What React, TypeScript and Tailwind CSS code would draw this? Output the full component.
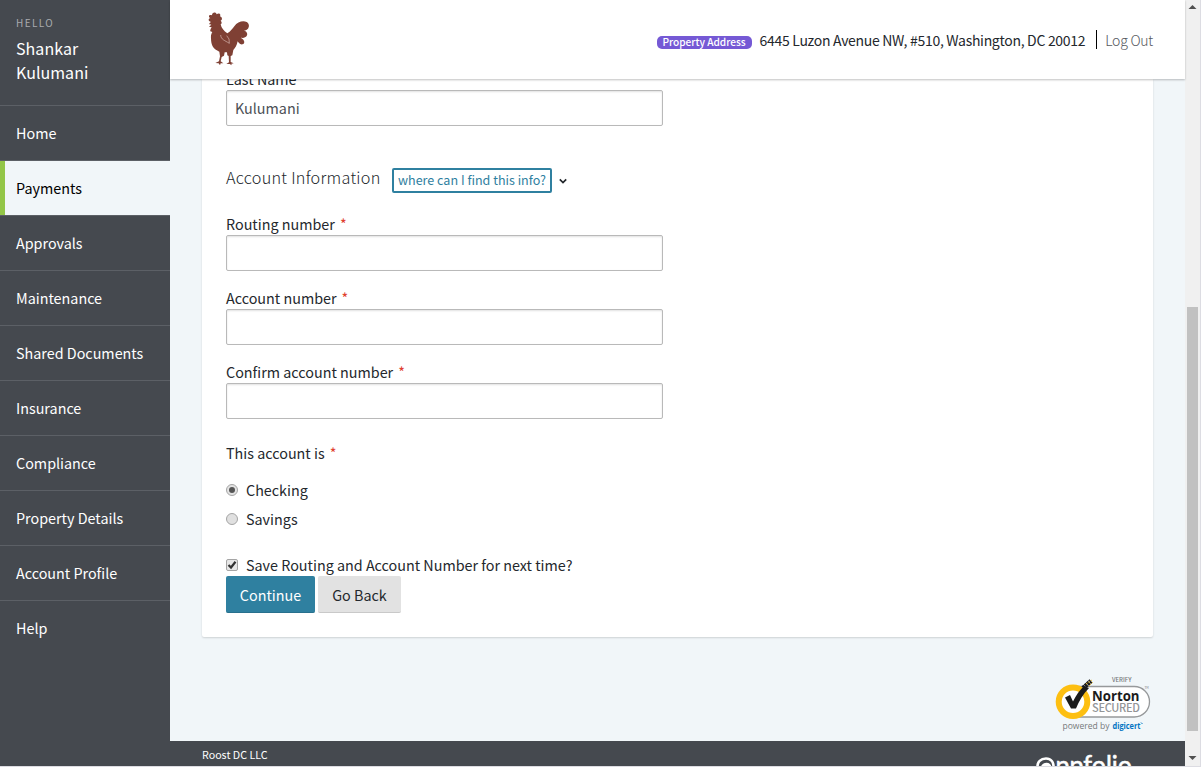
import React from "react";

const nav = [
  "Home",
  "Payments",
  "Approvals",
  "Maintenance",
  "Shared Documents",
  "Insurance",
  "Compliance",
  "Property Details",
  "Account Profile",
  "Help",
];

function Field({ label, value, required, gap }: { label: string; value?: string; required?: boolean; gap: string }) {
  return (
    <label className={`block ${gap}`}>
      <span className="block h-[22px] text-[14.35px] leading-[22px] text-[#24282d]">
        {label}
        {required && <span className="ml-[5px] text-[#e0402f]">*</span>}
      </span>
      <input
        readOnly
        defaultValue={value}
        className="block h-9 w-[437px] rounded-[2px] border border-[#b9b9b9] bg-white px-2 pb-[2px] text-[14.35px] text-[#4b4f55] shadow-[inset_0_1px_2px_rgba(0,0,0,0.12)] outline-none"
      />
    </label>
  );
}

function Rooster() {
  return (
    <svg className="-mt-px block h-[54px] w-[42px]" viewBox="54 36 126 162" fill="#7f4034">
      <path d="M64 74C56 74 56 70 63 66C54 64 54 55 61 55C53 49 58 42 66 46C66 36 78 35 80 43C86 37 94 42 90 49C98 52 97 60 92 62C96 66 96 70 92 73C94 84 102 93 112 100C122 94 128 86 133 79C142 66 158 61 170 66C180 72 177 82 173 87C168 92 162 92 160 92C174 92 175 108 165 112C160 115 154 113 152 113C164 118 166 130 158 133C150 135 146 129 143 124C140 137 136 144 130 150L127 166L122 168L122 186L131 190L124 191L125 196L119 192L109 192L117 187L116 168L112 166L111 157H104L102 167L95 171L92 184L100 190L92 190L90 196L86 190L76 189L87 184L90 169L88 155C70 147 63 137 63 115C62 105 65 99 67 96L61 94C60 90 62 86 65 82L57 80Z" />
      <path d="M92 105C93 119 104 121 118 130M118 130L117 117L110 107" fill="none" stroke="#ead0c9" strokeWidth="1.7" />
    </svg>
  );
}

export default function App() {
  return (
    <div className="h-[767px] w-[1201px] overflow-hidden border-b border-[#dcdce2] bg-[#f1f6f9] font-['Noto_Sans_CJK_SC',sans-serif] text-[#24282d]">
      <div className="flex h-[766px]">
        <aside className="h-full w-[170px] shrink-0 overflow-hidden bg-[#45494f] text-white">
          <div className="h-[105px] px-4 pt-[14px]">
            <div className="text-[10px] leading-[18px] tracking-[1.4px] text-[#a9abae]">HELLO</div>
            <div className="mt-1 text-[16px] leading-6 tracking-[0.05px]">Shankar<br />Kulumani</div>
          </div>
          <nav>
            {nav.map((n) => (
              <a
                key={n}
                className={
                  n === "Payments"
                    ? "flex h-[55px] items-center border-t border-[#5c6066] bg-[#f1f6f9] pl-4 text-[14.35px] text-black shadow-[inset_5px_0_0_#93c648]"
                    : "flex h-[55px] items-center border-t border-[#5c6066] pl-4 text-[14.35px]"
                }
              >
                {n}
              </a>
            ))}
          </nav>
        </aside>
        <div className="flex h-full w-[1015px] shrink-0 flex-col">
          <header className="relative z-10 flex h-[79px] shrink-0 items-center justify-between bg-white pr-8 pl-[38px] shadow-[0_1px_2px_rgba(0,0,0,0.25)]">
            <Rooster />
            <div className="flex items-center">
              <span className="mt-[5px] flex h-[13px] w-[95px] items-center justify-center rounded-[5px] bg-[#7559d5] pb-[2px] text-[10.1px] leading-[13px] font-medium text-white">Property Address</span>
              <span className="ml-2 text-[14px] leading-5 tracking-[-0.3px]">6445 Luzon Avenue NW, #510, Washington, DC 20012</span>
              <span className="ml-[11px] h-[19px] w-px bg-black" />
              <span className="ml-2 text-[14px] leading-5 font-light tracking-[-0.25px] text-[#55595e]">Log Out</span>
            </div>
          </header>
          <main className="h-[662px] shrink-0 px-8">
            <section className="h-[558px] overflow-hidden rounded-b-[2px] bg-white px-6 shadow-[0_1px_2px_rgba(0,0,0,0.15)]">
              <Field label="Last Name" value="Kulumani" gap="-mt-[11px]" />
              <div className="mt-[42px] flex h-[25px] items-center">
                <h2 className="-mt-[7px] text-[16.2px] leading-6 font-light tracking-[0.27px]">Account Information</h2>
                <button className="ml-[11.5px] h-[25px] w-[160px] rounded-[2px] border-2 border-[#2f80a0] pb-[2px] text-[12.55px] leading-[19px] text-[#2f80a0]">where can I find this info?</button>
                <svg className="ml-[7px] h-2 w-2" viewBox="0 0 8 8" fill="none" stroke="#24282d" strokeWidth="1.7"><path d="M.8 2.3L4 5.5L7.2 2.3" /></svg>
              </div>
              <Field label="Routing number" required gap="mt-5" />
              <Field label="Account number" required gap="mt-4" />
              <Field label="Confirm account number" required gap="mt-4" />
              <div className="mt-[23px] text-[14.35px] leading-[22px]">This account is<span className="ml-[5px] text-[#e0402f]">*</span></div>
              <div className="mt-[15px] flex h-[22px] items-center text-[14.35px]">
                <span className="mr-2 flex size-3 items-center justify-center rounded-full border border-[#a5a5a5] bg-[#e3e3e3]"><span className="size-[6px] rounded-full bg-[#555]" /></span>Checking
              </div>
              <div className="mt-[7px] flex h-[22px] items-center text-[14.35px]">
                <span className="mr-2 size-3 rounded-full border border-[#a5a5a5] bg-[#e0e0e0]" />Savings
              </div>
              <div className="mt-[24px] flex h-[22px] items-center text-[14.35px]">
                <span className="mr-2 flex size-3 items-center justify-center rounded-[2px] border border-[#a5a5a5] bg-[#e7e7e7]">
                  <svg className="size-[10px]" viewBox="0 0 10 10" fill="none" stroke="#333" strokeWidth="2.2"><path d="M1.5 5L4 7.5L8.5 1.8" /></svg>
                </span>
                Save Routing and Account Number for next time?
              </div>
              <div className="flex gap-[3px] text-[14.35px]">
                <button className="h-[37px] w-[89px] rounded-[2px] border-b border-[#28708d] bg-[#2f80a0] pt-px text-white">Continue</button>
                <button className="h-[37px] w-[83px] rounded-[2px] border-b border-[#c9c9c9] bg-[#e2e2e2] pt-px">Go Back</button>
              </div>
            </section>
            <div className="mt-[37px] flex justify-end">
              <svg className="h-[60px] w-[100px]" viewBox="1053 674 100 60">
                <text x="1112" y="682" fontSize="6.2" fontWeight="500" fill="#77797b" textLength="19.5" lengthAdjust="spacingAndGlyphs">VERIFY</text>
                <rect x="1064" y="686.5" width="85.5" height="30.5" rx="15.2" fill="#fff" stroke="#97999b" strokeWidth="1.3" />
                <circle cx="1073" cy="701.7" r="14.3" fill="#fff" stroke="#fdbf12" strokeWidth="6" />
                <path d="M1065 697.5L1070 695L1073 701.5C1076 695 1080 690 1084 686L1089 688C1083 694 1079 701 1076 708.5H1071Z" fill="#1c1c1c" />
                <path d="M1083 688L1091 681" stroke="#1c1c1c" strokeWidth="4.5" strokeDasharray="2.5 .4" />
                <path d="M1086 684L1092 680M1089 686L1093 682" stroke="#fdbf12" strokeWidth="1" strokeDasharray="1 1" />
                <text x="1092" y="701" fontFamily="Open Sans" fontSize="14.5" fontWeight="700" fill="#1c1c1c" textLength="47.5" lengthAdjust="spacingAndGlyphs">Norton</text>
                <text x="1092" y="712" fontSize="11" fontWeight="500" fill="#939597" textLength="48">SECURED</text>
                <text x="1144.5" y="688.5" fontSize="3" fill="#77797b">TM</text>
                <text x="1062.5" y="729" fontFamily="Open Sans" fontSize="8.8" fill="#77797b" textLength="47" lengthAdjust="spacingAndGlyphs">powered by</text>
                <text x="1112.5" y="729" fontFamily="Open Sans" fontSize="9" fontWeight="700" fill="#0174c3" textLength="28" lengthAdjust="spacingAndGlyphs">digicert</text>
                <path d="M1141 722.5L1142.500 724" stroke="#0174c3" />
              </svg>
            </div>
          </main>
          <footer className="flex h-[25px] shrink-0 justify-between overflow-hidden bg-[#45494f] px-8 text-white">
            <span className="pt-[5px] text-[10.7px] leading-[18px]">Roost DC LLC</span>
            <svg className="mr-[20px] h-[25px] w-[98px]" viewBox="1035 741 98 25">
              <path d="M1037.5 768C1037 761.500 1041 758.500 1046 758.500C1051 758.500 1054 762 1053.500 768M1042 769C1041.500 762.500 1051 762.500 1050 768C1048 765 1044 765 1043 768" fill="none" stroke="#fff" strokeWidth="2.6" />
              <text x="1055.5" y="774.5" fontFamily="Lato" fontSize="27" fontWeight="400" fill="#fff" stroke="#fff" strokeWidth=".6" textLength="76.5" lengthAdjust="spacingAndGlyphs">ppfolio</text>
            </svg>
          </footer>
        </div>
        <div className="flex h-full w-4 shrink-0 flex-col border-r border-[#dcdce2] bg-[#f0f0f0]">
          <svg className="h-[17px] w-[15px]" viewBox="0 0 15 17"><path d="M3.5 9L7.5 5L11.5 9Z" fill="#505050" /></svg>
          <div className="mt-[290px] ml-[2px] h-[424px] w-[11px] bg-[#c1c1c1]" />
          <svg className="mt-[19px] h-[16px] w-[15px]" viewBox="0 0 15 16"><path d="M3.5 6L7.5 10L11.5 6Z" fill="#505050" /></svg>
        </div>
      </div>
    </div>
  );
}
